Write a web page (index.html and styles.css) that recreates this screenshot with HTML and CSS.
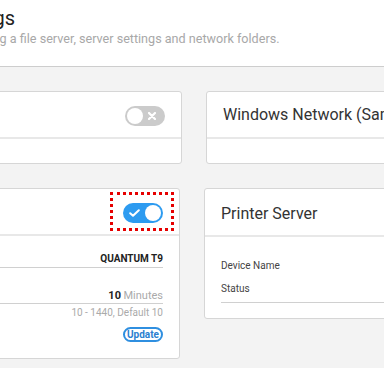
FILE: index.html
```html
<!DOCTYPE html>
<html lang="en">
<head>
  <meta charset="UTF-8" />
  <meta name="viewport" content="width=device-width, initial-scale=1.0" />
  <title>Settings</title>
  <link rel="stylesheet" href="styles.css">
</head>
<body>
  <header class="page-header">
    <div class="page-header-inner">
      <h1>Settings</h1>
      <p class="subtitle">Configuring a file server, server settings and network folders.</p>
    </div>
  </header>

  <main class="cards">
    <div class="row">
      <section class="card">
        <div class="card-header">
          <h2 class="card-title">File Server</h2>
          <span class="switch switch-off">
            <span class="knob"></span>
            <svg class="switch-icon" width="8" height="8" viewBox="0 0 8 8"><path d="M1 1L7 7M7 1L1 7" stroke="#fff" stroke-width="2.2" stroke-linecap="round"/></svg>
          </span>
        </div>
        <div class="card-body"></div>
      </section>
      <section class="card">
        <div class="card-header">
          <h2 class="card-title">Windows Network (Samba)</h2>
        </div>
        <div class="card-body"></div>
      </section>
    </div>

    <div class="row">
      <section class="card card-narrow">
        <div class="card-header">
          <h2 class="card-title">Media Server</h2>
          <span class="switch switch-on switch-focus">
            <svg class="switch-icon" width="11" height="8" viewBox="0 0 11 8"><path d="M1.2 4.2L4 6.8L9.8 1.2" fill="none" stroke="#fff" stroke-width="2" stroke-linecap="round" stroke-linejoin="round"/></svg>
            <span class="knob"></span>
          </span>
        </div>
        <div class="card-body spec">
          <div class="spec-row first">
            <span class="spec-label">Model</span>
            <span class="spec-value">QUANTUM T9</span>
          </div>
          <div class="spec-row second">
            <span class="spec-label">Sleep Timer</span>
            <span><b class="num">10</b> <span class="unit">Minutes</span></span>
          </div>
          <div class="hint">10 - 1440, Default 10</div>
          <div class="actions">
            <button class="btn-update">Update</button>
          </div>
        </div>
      </section>
      <section class="card">
        <div class="card-header printer-header">
          <h2 class="card-title">Printer Server</h2>
        </div>
        <div class="card-body info">
          <div class="info-row">Device Name</div>
          <div class="info-row info-last">Status</div>
        </div>
      </section>
    </div>
  </main>
</body>
</html>
```

FILE: styles.css
```css
html, body {
  overflow: hidden;
}
body {
  margin: 0;
  font-family: Roboto, "Liberation Sans", sans-serif;
  background: #f3f3f3;
  color: #333;
}
.page-header {
  height: 66px;
  background: #fff;
  border-bottom: 1px solid #cdcdcd;
}
.page-header-inner {
  margin-left: -58px;
  padding-top: 6px;
}
.page-header h1 {
  margin: 0;
  font-size: 20px;
  font-weight: 400;
  line-height: 24px;
  color: #222;
}
.subtitle {
  margin: 0;
  padding-top: 1px;
  font-size: 12.6px;
  line-height: 16px;
  color: #a8a8a8;
}
.cards {
  margin-left: -160px;
  padding-top: 24px;
  display: flex;
  flex-direction: column;
  gap: 24px;
}
.row {
  display: flex;
  gap: 24px;
  align-items: flex-start;
}
.card {
  flex: none;
  width: 340px;
  background: #fff;
  border: 1px solid #d6d6d6;
  border-radius: 3px;
}
.card-narrow {
  width: 338px;
}
.card-header {
  height: 45px;
  padding: 0 16px;
  display: flex;
  align-items: center;
  justify-content: space-between;
  border-bottom: 2px solid #e8e8e8;
}
.printer-header {
  padding-top: 3px;
  height: 43px;
}
.card-title {
  margin: 0;
  font-size: 16px;
  font-weight: 400;
  color: #333;
  white-space: nowrap;
}
.card-body {
  min-height: 24px;
  padding: 0 16px;
}

/* switches */
.switch {
  position: relative;
  width: 40px;
  height: 20px;
  margin-top: 3px;
  padding: 2px;
  box-sizing: border-box;
  border-radius: 10px;
  display: flex;
  align-items: center;
}
.switch .knob {
  width: 16px;
  height: 16px;
  border-radius: 50%;
  background: #fff;
}
.switch-off {
  background: #cbcbcb;
}
.switch-off .switch-icon {
  margin-left: 5px;
}
.switch-on {
  background: #2d9bf0;
  justify-content: space-between;
}
.switch-on .switch-icon {
  margin-left: 4px;
}
.switch-focus::after {
  content: "";
  position: absolute;
  left: -13px;
  right: -11px;
  top: -11px;
  bottom: -8px;
  border: 3px dotted #e60000;
}

/* media server body */
.spec {
  padding-bottom: 16px;
  font-size: 10px;
  line-height: 14px;
}
.spec-row {
  display: flex;
  justify-content: space-between;
  align-items: baseline;
  border-bottom: 1px solid #d0d0d0;
}
.spec-row.first {
  padding: 16px 0 1px;
}
.spec-row.second {
  padding-top: 21px;
}
.spec-label {
  color: #444;
}
.spec-value {
  font-weight: 700;
  color: #222;
}
.num {
  font-size: 11px;
  color: #222;
}
.unit {
  font-size: 11px;
  color: #aaa;
}
.hint {
  margin-top: 2px;
  text-align: right;
  color: #aaa;
}
.actions {
  display: flex;
  justify-content: flex-end;
  margin-top: 7px;
}
.btn-update {
  font-family: inherit;
  font-size: 10px;
  font-weight: 700;
  line-height: 11px;
  padding: 0 2px;
  color: #2a7fd0;
  background: #fff;
  border: 2px solid #2f8fe0;
  border-radius: 8px;
}

/* printer server body */
.info {
  padding-top: 22px;
  padding-bottom: 15px;
  font-size: 10px;
  line-height: 14px;
  color: #444;
}
.info-last {
  margin-top: 9px;
  padding-bottom: 6px;
  border-bottom: 1px solid #d0d0d0;
}
```
